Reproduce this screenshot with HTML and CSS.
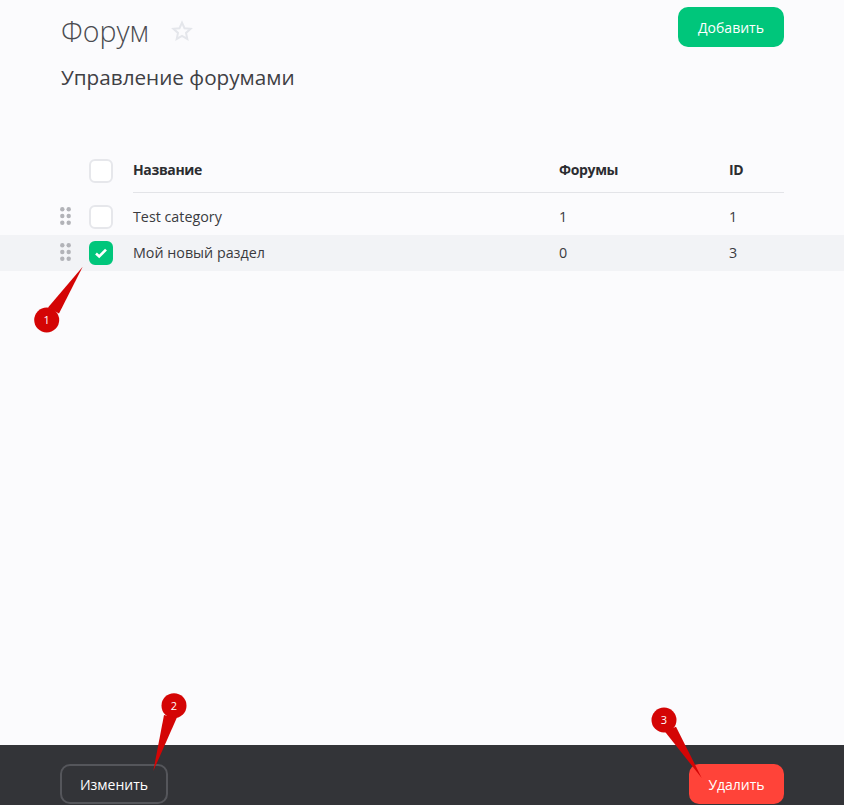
FILE: index.html
```html
<!DOCTYPE html>
<html lang="ru">

    <head>
        <meta charset="UTF-8">
        <meta name="viewport" content="width=device-width, initial-scale=1.0">
        <title>Форум</title>
        <link rel="stylesheet" href="styles.css">
    </head>

    <body>
        <div id="screen">
            <div id="content">
                <div class="page-head">
                    <div class="head-text">
                        <div class="title-row">
                            <h1>Форум</h1>
                            <svg class="star" width="22" height="22" viewBox="0 0 22 22">
                                <path d="M11 2.6l2.5 5.6 6.1.6-4.6 4.1 1.3 6-5.3-3.1-5.3 3.1 1.3-6-4.6-4.1 6.1-.6z" />
                            </svg>
                        </div>
                        <h2>Управление форумами</h2>
                    </div>
                    <a class="btn btn-green">Добавить</a>
                </div>

                <div class="table">
                    <div class="row row-head">
                        <div></div>
                        <div class="cell-check"><span class="checkbox"></span></div>
                        <div class="cell-head">Название</div>
                        <div class="cell-head">Форумы</div>
                        <div class="cell-head">ID</div>
                    </div>
                    <div class="row">
                        <svg class="drag" width="11" height="18" viewBox="0 0 11 18">
                            <circle cx="2.3" cy="2.3" r="2.2" /><circle cx="8.7" cy="2.3" r="2.2" />
                            <circle cx="2.3" cy="9" r="2.2" /><circle cx="8.7" cy="9" r="2.2" />
                            <circle cx="2.3" cy="15.7" r="2.2" /><circle cx="8.7" cy="15.7" r="2.2" />
                        </svg>
                        <div class="cell-check"><span class="checkbox"></span></div>
                        <div class="cell">Test category</div>
                        <div class="cell">1</div>
                        <div class="cell">1</div>
                    </div>
                    <div class="row row-active">
                        <svg class="drag" width="11" height="18" viewBox="0 0 11 18">
                            <circle cx="2.3" cy="2.3" r="2.2" /><circle cx="8.7" cy="2.3" r="2.2" />
                            <circle cx="2.3" cy="9" r="2.2" /><circle cx="8.7" cy="9" r="2.2" />
                            <circle cx="2.3" cy="15.7" r="2.2" /><circle cx="8.7" cy="15.7" r="2.2" />
                        </svg>
                        <div class="cell-check">
                            <span class="checkbox checked">
                                <svg width="14" height="12" viewBox="0 0 14 12">
                                    <path d="M2 6.5l3.2 3L12 2.6" />
                                </svg>
                            </span>
                        </div>
                        <div class="cell">Мой новый раздел</div>
                        <div class="cell">0</div>
                        <div class="cell">3</div>
                    </div>
                </div>
            </div>

            <div id="footer">
                <a class="btn btn-outline">Изменить</a>
                <a class="btn btn-red">Удалить</a>
            </div>

            <!-- numbered callouts drawn over the screenshot -->
            <svg class="callouts" width="844" height="805" viewBox="0 0 844 805">
                <circle cx="46.7" cy="320" r="12.5" />
                <path d="M82.7 266.7L48 307.5 59 313.5z" />
                <text x="46.7" y="324">1</text>
                <circle cx="174" cy="705.7" r="12.5" />
                <path d="M153.3 771L164 715l12.7 3z" />
                <text x="174" y="710">2</text>
                <circle cx="664" cy="720" r="12.5" />
                <path d="M701.7 778L665 731.7l11-5z" />
                <text x="664" y="724">3</text>
            </svg>
        </div>
    </body>

</html>
```

FILE: styles.css
```css
*{
    margin:0;
    padding:0;
    box-sizing:border-box;
    font-family:"Open Sans", sans-serif;
}
body{
    background-color:#fbfbfd;
}
#screen{
    width:100%;
    height:100vh;
    display:flex;
    flex-direction:column;
    position:relative;
    overflow:hidden;
    color:#3a3b3f;
    font-size:14px;
}
#content{
    flex:1;
}
.page-head{
    display:flex;
    justify-content:space-between;
    align-items:flex-start;
    padding:7px 60px 0 60px;
}
.head-text{
    padding-left:1px;
}
.title-row{
    display:flex;
    align-items:center;
    height:50px;
}
h1{
    font-size:28.5px;
    font-weight:300;
    color:#4a4b50;
    margin-top:-2px;
}
.star{
    margin-left:22px;
    margin-top:-2px;
}
.star path{
    fill:none;
    stroke:#e4e6eb;
    stroke-width:2;
}
h2{
    font-size:20.7px;
    font-weight:400;
    color:#3f4044;
    margin-top:6px;
}
.btn{
    display:flex;
    align-items:center;
    justify-content:center;
    height:40px;
    border-radius:10px;
    color:white;
    font-size:14px;
}
.btn-green{
    width:106px;
    background-color:#00c67b;
}
.table{
    margin-top:57px;
}
.row{
    display:grid;
    grid-template-columns:29px 44px 426px 170px 55px;
    align-items:center;
    height:36px;
    padding-left:60px;
}
.row-head{
    height:45px;
    margin-bottom:6px;
    align-items:stretch;
}
.row-active{
    background-color:#f2f3f6;
}
.cell{
    padding-bottom:2px;
    font-size:14.3px;
}
.cell-head{
    display:flex;
    align-items:center;
    padding-bottom:2px;
    font-weight:700;
    letter-spacing:-.35px;
    color:#2c2d31;
    border-bottom:1px solid #e3e4e8;
}
.cell-check{
    display:flex;
    align-items:center;
}
.checkbox{
    display:flex;
    align-items:center;
    justify-content:center;
    width:24px;
    height:24px;
    border:2px solid #e6e7eb;
    border-radius:6px;
    background-color:white;
}
.checked{
    background-color:#00c67b;
    border-color:#00c67b;
}
.checked path{
    fill:none;
    stroke:white;
    stroke-width:2.6;
}
.drag{
    margin-top:-3px;
}
.drag circle{
    fill:#b2b3b8;
}
#footer{
    height:60px;
    padding:19px 60px 0 60px;
    display:flex;
    justify-content:space-between;
    align-items:flex-start;
    background-color:#333438;
}
.btn-outline{
    width:108px;
    border:2px solid #55565b;
}
.btn-red{
    width:95px;
    background-color:#ff4339;
}
.callouts{
    position:absolute;
    left:0;
    top:0;
}
.callouts circle,
.callouts path{
    fill:#d40505;
}
.callouts text{
    fill:white;
    font-size:11px;
    text-anchor:middle;
}
```
